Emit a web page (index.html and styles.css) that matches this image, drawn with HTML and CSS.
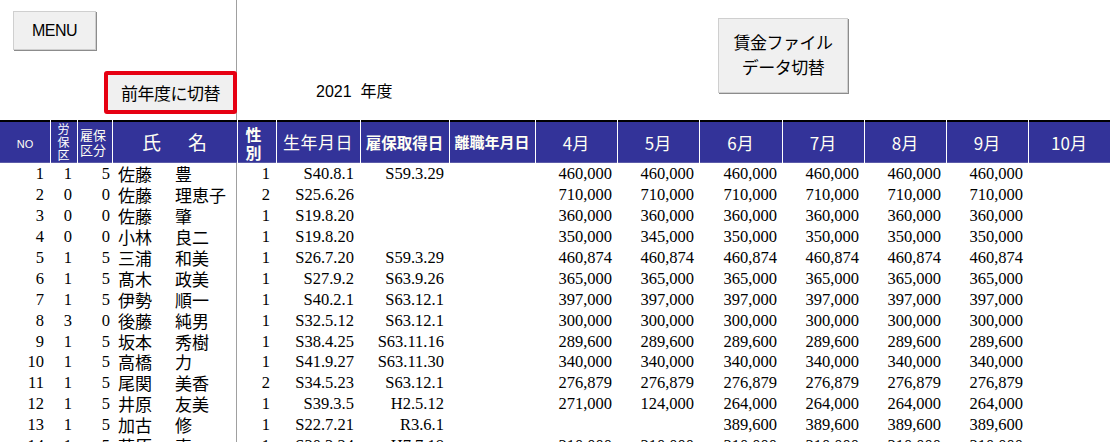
FILE: index.html
```html
<!DOCTYPE html>
<html lang="ja">
<head>
    <meta charset="UTF-8">
    <meta name="viewport" content="width=device-width, initial-scale=1.0">
    <title>賃金台帳</title>
    <link rel="stylesheet" href="styles.css">
</head>
<body>
    <div class="sheet">
        <div class="controls">
            <div class="controls-left">
                <button class="btn btn-menu">MENU</button>
                <button class="btn btn-prev">前年度に切替</button>
            </div>
            <div class="controls-right">
                <div class="year">2021&nbsp; 年度</div>
                <button class="btn btn-wage">賃金ファイル<br>データ切替</button>
            </div>
        </div>

        <table class="grid">
            <colgroup>
                <col style="width:50px"><col style="width:27px"><col style="width:35px"><col style="width:125px">
                <col style="width:39px"><col style="width:84px"><col style="width:89px"><col style="width:86px">
                <col style="width:82px"><col style="width:82px"><col style="width:83px"><col style="width:82px">
                <col style="width:82px"><col style="width:82px"><col style="width:82px">
            </colgroup>
            <thead>
                <tr>
                    <th class="h-no">NO</th>
                    <th class="h-ins"><div>労<br>保<br>区</div></th>
                    <th class="h-emp">雇保<br>区分</th>
                    <th class="h-name">氏　名</th>
                    <th class="h-sex">性<br>別</th>
                    <th class="h-birth">生年月日</th>
                    <th class="h-bold">雇保取得日</th>
                    <th class="h-bold h-leave">離職年月日</th>
                    <th class="h-month">4月</th>
                    <th class="h-month">5月</th>
                    <th class="h-month">6月</th>
                    <th class="h-month">7月</th>
                    <th class="h-month">8月</th>
                    <th class="h-month">9月</th>
                    <th class="h-month">10月</th>
                </tr>
            </thead>
            <tbody>
                <tr><td class="c-no">1</td><td class="c-ins">1</td><td class="c-emp">5</td><td class="c-name"><span class="sei">佐藤</span>豊</td><td class="c-sex">1</td><td class="c-date">S40.8.1</td><td class="c-join">S59.3.29</td><td></td><td class="c-pay">460,000</td><td class="c-pay">460,000</td><td class="c-pay">460,000</td><td class="c-pay">460,000</td><td class="c-pay">460,000</td><td class="c-pay">460,000</td><td></td></tr>
                <tr><td class="c-no">2</td><td class="c-ins">0</td><td class="c-emp">0</td><td class="c-name"><span class="sei">佐藤</span>理恵子</td><td class="c-sex">2</td><td class="c-date">S25.6.26</td><td class="c-join"></td><td></td><td class="c-pay">710,000</td><td class="c-pay">710,000</td><td class="c-pay">710,000</td><td class="c-pay">710,000</td><td class="c-pay">710,000</td><td class="c-pay">710,000</td><td></td></tr>
                <tr><td class="c-no">3</td><td class="c-ins">0</td><td class="c-emp">0</td><td class="c-name"><span class="sei">佐藤</span>肇</td><td class="c-sex">1</td><td class="c-date">S19.8.20</td><td class="c-join"></td><td></td><td class="c-pay">360,000</td><td class="c-pay">360,000</td><td class="c-pay">360,000</td><td class="c-pay">360,000</td><td class="c-pay">360,000</td><td class="c-pay">360,000</td><td></td></tr>
                <tr><td class="c-no">4</td><td class="c-ins">0</td><td class="c-emp">0</td><td class="c-name"><span class="sei">小林</span>良二</td><td class="c-sex">1</td><td class="c-date">S19.8.20</td><td class="c-join"></td><td></td><td class="c-pay">350,000</td><td class="c-pay">345,000</td><td class="c-pay">350,000</td><td class="c-pay">350,000</td><td class="c-pay">350,000</td><td class="c-pay">350,000</td><td></td></tr>
                <tr><td class="c-no">5</td><td class="c-ins">1</td><td class="c-emp">5</td><td class="c-name"><span class="sei">三浦</span>和美</td><td class="c-sex">1</td><td class="c-date">S26.7.20</td><td class="c-join">S59.3.29</td><td></td><td class="c-pay">460,874</td><td class="c-pay">460,874</td><td class="c-pay">460,874</td><td class="c-pay">460,874</td><td class="c-pay">460,874</td><td class="c-pay">460,874</td><td></td></tr>
                <tr><td class="c-no">6</td><td class="c-ins">1</td><td class="c-emp">5</td><td class="c-name"><span class="sei">髙木</span>政美</td><td class="c-sex">1</td><td class="c-date">S27.9.2</td><td class="c-join">S63.9.26</td><td></td><td class="c-pay">365,000</td><td class="c-pay">365,000</td><td class="c-pay">365,000</td><td class="c-pay">365,000</td><td class="c-pay">365,000</td><td class="c-pay">365,000</td><td></td></tr>
                <tr><td class="c-no">7</td><td class="c-ins">1</td><td class="c-emp">5</td><td class="c-name"><span class="sei">伊勢</span>順一</td><td class="c-sex">1</td><td class="c-date">S40.2.1</td><td class="c-join">S63.12.1</td><td></td><td class="c-pay">397,000</td><td class="c-pay">397,000</td><td class="c-pay">397,000</td><td class="c-pay">397,000</td><td class="c-pay">397,000</td><td class="c-pay">397,000</td><td></td></tr>
                <tr><td class="c-no">8</td><td class="c-ins">3</td><td class="c-emp">0</td><td class="c-name"><span class="sei">後藤</span>純男</td><td class="c-sex">1</td><td class="c-date">S32.5.12</td><td class="c-join">S63.12.1</td><td></td><td class="c-pay">300,000</td><td class="c-pay">300,000</td><td class="c-pay">300,000</td><td class="c-pay">300,000</td><td class="c-pay">300,000</td><td class="c-pay">300,000</td><td></td></tr>
                <tr><td class="c-no">9</td><td class="c-ins">1</td><td class="c-emp">5</td><td class="c-name"><span class="sei">坂本</span>秀樹</td><td class="c-sex">1</td><td class="c-date">S38.4.25</td><td class="c-join">S63.11.16</td><td></td><td class="c-pay">289,600</td><td class="c-pay">289,600</td><td class="c-pay">289,600</td><td class="c-pay">289,600</td><td class="c-pay">289,600</td><td class="c-pay">289,600</td><td></td></tr>
                <tr><td class="c-no">10</td><td class="c-ins">1</td><td class="c-emp">5</td><td class="c-name"><span class="sei">高橋</span>力</td><td class="c-sex">1</td><td class="c-date">S41.9.27</td><td class="c-join">S63.11.30</td><td></td><td class="c-pay">340,000</td><td class="c-pay">340,000</td><td class="c-pay">340,000</td><td class="c-pay">340,000</td><td class="c-pay">340,000</td><td class="c-pay">340,000</td><td></td></tr>
                <tr><td class="c-no">11</td><td class="c-ins">1</td><td class="c-emp">5</td><td class="c-name"><span class="sei">尾関</span>美香</td><td class="c-sex">2</td><td class="c-date">S34.5.23</td><td class="c-join">S63.12.1</td><td></td><td class="c-pay">276,879</td><td class="c-pay">276,879</td><td class="c-pay">276,879</td><td class="c-pay">276,879</td><td class="c-pay">276,879</td><td class="c-pay">276,879</td><td></td></tr>
                <tr><td class="c-no">12</td><td class="c-ins">1</td><td class="c-emp">5</td><td class="c-name"><span class="sei">井原</span>友美</td><td class="c-sex">1</td><td class="c-date">S39.3.5</td><td class="c-join">H2.5.12</td><td></td><td class="c-pay">271,000</td><td class="c-pay">124,000</td><td class="c-pay">264,000</td><td class="c-pay">264,000</td><td class="c-pay">264,000</td><td class="c-pay">264,000</td><td></td></tr>
                <tr><td class="c-no">13</td><td class="c-ins">1</td><td class="c-emp">5</td><td class="c-name"><span class="sei">加古</span>修</td><td class="c-sex">1</td><td class="c-date">S22.7.21</td><td class="c-join">R3.6.1</td><td></td><td class="c-pay"></td><td class="c-pay"></td><td class="c-pay">389,600</td><td class="c-pay">389,600</td><td class="c-pay">389,600</td><td class="c-pay">389,600</td><td></td></tr>
                <tr><td class="c-no">14</td><td class="c-ins">1</td><td class="c-emp">5</td><td class="c-name"><span class="sei">藤原</span>恵</td><td class="c-sex">1</td><td class="c-date">S30.3.24</td><td class="c-join">H7.7.18</td><td></td><td class="c-pay">310,000</td><td class="c-pay">310,000</td><td class="c-pay">310,000</td><td class="c-pay">310,000</td><td class="c-pay">310,000</td><td class="c-pay">310,000</td><td></td></tr>
            </tbody>
        </table>
    </div>
</body>
</html>
```

FILE: styles.css
```css
*{
    margin: 0;
    padding: 0;
    box-sizing: border-box;
}
body{
    width: 1111px;
    height: 442px;
    overflow: hidden;
    background-color: #fff;
    font-family: "Liberation Sans", "Noto Sans CJK JP", sans-serif;
    color: #000;
}

/* top area with the sheet buttons */
.controls{
    display: grid;
    grid-template-columns: 237px 1fr;
    height: 120px;
}
.controls-left{
    display: flex;
    flex-direction: column;
    align-items: flex-start;
    box-shadow: inset -1px 0 0 #a0a0a0;
}
.controls-right{
    display: grid;
    grid-template-columns: 481px 130px;
    align-items: start;
}
.btn{
    font-family: "Liberation Sans", "Noto Sans CJK JP", sans-serif;
    background-color: #f0f0f0;
    border: 1px solid #cfcfcf;
    box-shadow: 1px 1px 0 #8c8c8c;
    color: #000;
    cursor: pointer;
}
.btn-menu{
    width: 83px;
    height: 39px;
    margin: 11px 0 0 13px;
    font-size: 16px;
    letter-spacing: -0.5px;
}
.btn-prev{
    width: 133px;
    height: 43px;
    margin: 21px 0 0 104px;
    border: 4px solid #e60012;
    border-radius: 3px;
    box-shadow: none;
    font-size: 17px;
    letter-spacing: -0.5px;
}
.year{
    padding: 82px 0 0 79px;
    font-size: 16px;
    line-height: 20px;
}
.btn-wage{
    width: 130px;
    height: 75px;
    margin-top: 18px;
    font-size: 17px;
    line-height: 25px;
    letter-spacing: -0.5px;
}

/* spreadsheet */
.grid{
    width: 1110px;
    table-layout: fixed;
    border-collapse: collapse;
}
.grid th{
    height: 43px;
    padding: 0;
    background-color: #333399;
    color: #fffff4;
    font-family: "Noto Sans CJK JP", "Liberation Sans", sans-serif;
    font-weight: normal;
    white-space: nowrap;
    box-shadow: inset 1px 0 0 #fff, inset 0 2px 0 #000, inset 0 -1px 0 #5b5ba8;
}
.grid th.h-no{
    font-family: "Liberation Sans", sans-serif;
    font-size: 11px;
    padding-top: 4px;
    box-shadow: inset 0 2px 0 #000, inset 0 -1px 0 #5b5ba8;
}
.h-ins{
    vertical-align: top;
}
.h-ins div{
    height: 41px;
    padding-top: 2px;
    overflow: hidden;
    font-size: 12px;
    line-height: 13px;
    color: #fff;
}
.h-emp{
    font-size: 13px;
    line-height: 15px;
    text-align: left;
    padding-left: 3px !important;
}
.h-name{
    font-size: 19px;
    letter-spacing: 4px;
    padding-left: 4px !important;
}
.h-sex{
    font-size: 16px;
    font-weight: bold !important;
    line-height: 18px;
    padding-top: 2px !important;
    padding-right: 6px !important;
}
.h-birth{
    font-size: 17px;
    letter-spacing: 0.5px;
}
.h-bold{
    font-size: 15.5px;
    font-weight: bold !important;
}
.h-leave{
    font-size: 15px;
}
.h-month{
    font-size: 17px;
    padding-top: 2px !important;
}

.grid td{
    height: 20.9px;
    padding: 2px 0 0;
    font-family: "Liberation Serif", "Noto Sans CJK JP", serif;
    font-size: 16.5px;
    line-height: 18px;
    white-space: nowrap;
    text-align: right;
}
.grid td.c-no{
    padding-right: 6px;
}
.grid td.c-ins{
    padding-right: 5px;
}
.grid td.c-emp{
    padding-right: 2px;
}
.grid td.c-name{
    text-align: left;
    padding-left: 6px;
    font-family: "Noto Sans CJK JP", sans-serif;
    font-size: 17px;
    box-shadow: inset -1px 0 0 #a0a0a0;
}
.sei{
    display: inline-block;
    width: 57px;
}
.grid td.c-sex{
    padding-right: 6px;
}
.grid td.c-date{
    padding-right: 6px;
}
.grid td.c-join{
    padding-right: 5px;
}
.grid td.c-pay{
    padding-right: 5px;
}
```
